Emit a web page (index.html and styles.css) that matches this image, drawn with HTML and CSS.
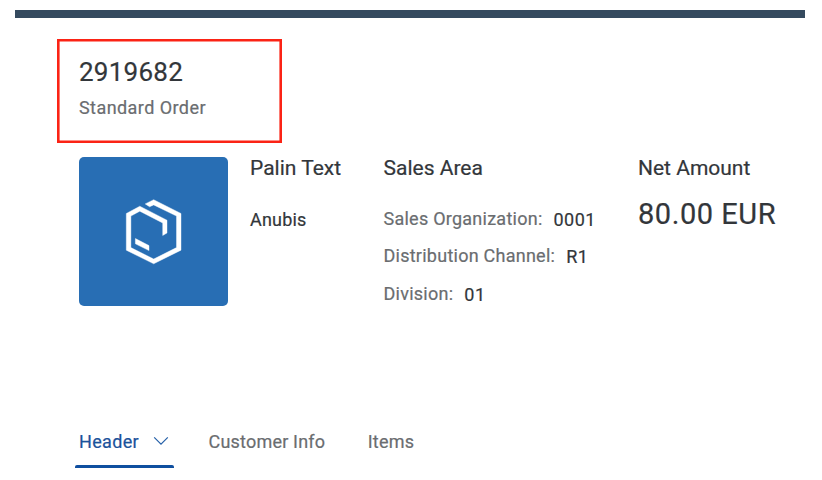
FILE: index.html
```html
<!DOCTYPE html>
<html lang="en">
<head>
<meta charset="utf-8">
<title>Standard Order 2919682</title>
<link rel="stylesheet" href="styles.css">
</head>
<body>
<div class="shell-bar"></div>
<header class="order-title">
  <h1 class="order-number">2919682</h1>
  <p class="order-type">Standard Order</p>
</header>
<main class="facets">
  <div class="avatar">
    <svg width="149" height="149" viewBox="0 0 149 149" aria-hidden="true">
      <g fill="#fff" stroke="#fff" stroke-width="0.4">
        <path d="M66.2 46.9 74.7 42.7 102 56.5V93.2L74.7 106.8 47.3 93.2V56.5L60.8 49.2 88 63.2V76L83.7 78.5V66L60.8 54.2 51.9 59.1V90.6L74.7 102 97.5 90.6V59.1L74.7 47.9 70.6 49.8Z"/>
        <path d="M56.4 81.5 70 88.6V93.6L56.4 86.8Z"/>
      </g>
    </svg>
  </div>
  <section class="facet facet-text">
    <h2 class="facet-title">Palin Text</h2>
    <p class="plain">Anubis</p>
  </section>
  <section class="facet facet-area">
    <h2 class="facet-title">Sales Area</h2>
    <dl class="fields">
      <div class="field"><dt>Sales Organization:</dt><dd>0001</dd></div>
      <div class="field"><dt>Distribution Channel:</dt><dd>R1</dd></div>
      <div class="field"><dt>Division:</dt><dd>01</dd></div>
    </dl>
  </section>
  <section class="facet">
    <h2 class="facet-title">Net Amount</h2>
    <p class="amount">80.00 EUR</p>
  </section>
</main>
<nav class="tabs">
  <a class="tab tab-header">Header
    <svg class="chevron" width="16" height="10" viewBox="0 0 16 10" aria-hidden="true"><path d="M1.2 1.4 8 8.2 14.8 1.4" fill="none" stroke="#2560a8" stroke-width="1.2"/></svg>
  </a>
  <a class="tab tab-customer">Customer Info</a>
  <a class="tab tab-items">Items</a>
</nav>
</body>
</html>
```
FILE: styles.css
```css
* { box-sizing: border-box; }

body {
  margin: 0;
  height: 480px;
  overflow: hidden;
  background: #fff;
  color: #32363a;
  font: 18px/24px Roboto, "Liberation Sans", sans-serif;
  white-space: nowrap;
  -webkit-text-stroke: 0.2px;
}

h1, h2, p, dl, dd { margin: 0; font-weight: 400; }

.shell-bar {
  height: 8px;
  margin: 10px 17px 0 15px;
  background: #354a5f;
}

.order-title {
  width: 225px;
  height: 104px;
  margin: 21px 0 0 57px;
  padding: 15px 20px 0;
  border: 2px solid #fb2315;
  box-shadow: inset 0 0 0 0.6px #fb2315;
}

.order-number {
  font-size: 26px;
  line-height: 32px;
  letter-spacing: 0.25px;
}

.order-type {
  margin-top: 8px;
  color: #6a6d70;
  letter-spacing: 0.43px;
}

.facets {
  display: flex;
  height: 149px;
  margin: 14px 0 0 79px;
}

.avatar {
  width: 149px;
  height: 149px;
  border-radius: 5px;
  background: #286eb4;
  overflow: hidden;
}

.avatar svg { display: block; }

.facet-text { width: 133.5px; margin-left: 22px; }
.facet-area { width: 254.5px; }

.facet-title {
  height: 24px;
  font-size: 21px;
  line-height: 22px;
}

.plain {
  margin-top: 27px;
  letter-spacing: 0.2px;
}

.fields { margin-top: 25.5px; }

.field {
  display: flex;
  height: 37.5px;
}

.field dt {
  color: #6a6d70;
  letter-spacing: 0.25px;
}

.field dd {
  margin-left: 11px;
  padding-top: 1px;
  letter-spacing: 0.5px;
}

.amount {
  margin-top: 17px;
  font-size: 29px;
  line-height: 32px;
  letter-spacing: 0.55px;
}

.tabs {
  display: flex;
  margin: 124px 0 0 75px;
}

.tab {
  height: 38px;
  color: #6a6d70;
  letter-spacing: 0.2px;
}

.tab-header {
  position: relative;
  display: flex;
  width: 98.5px;
  padding-left: 4px;
  color: #1b529b;
  letter-spacing: 0.35px;
}

.tab-header::after {
  content: "";
  position: absolute;
  inset: auto 0 0;
  height: 3px;
  border-radius: 2px 2px 0 0;
  background: #0f4f9f;
}

.chevron { margin: 6px 5px 0 auto; }

.tab-customer { margin-left: 35px; }
.tab-items { margin-left: 42.5px; }
```
